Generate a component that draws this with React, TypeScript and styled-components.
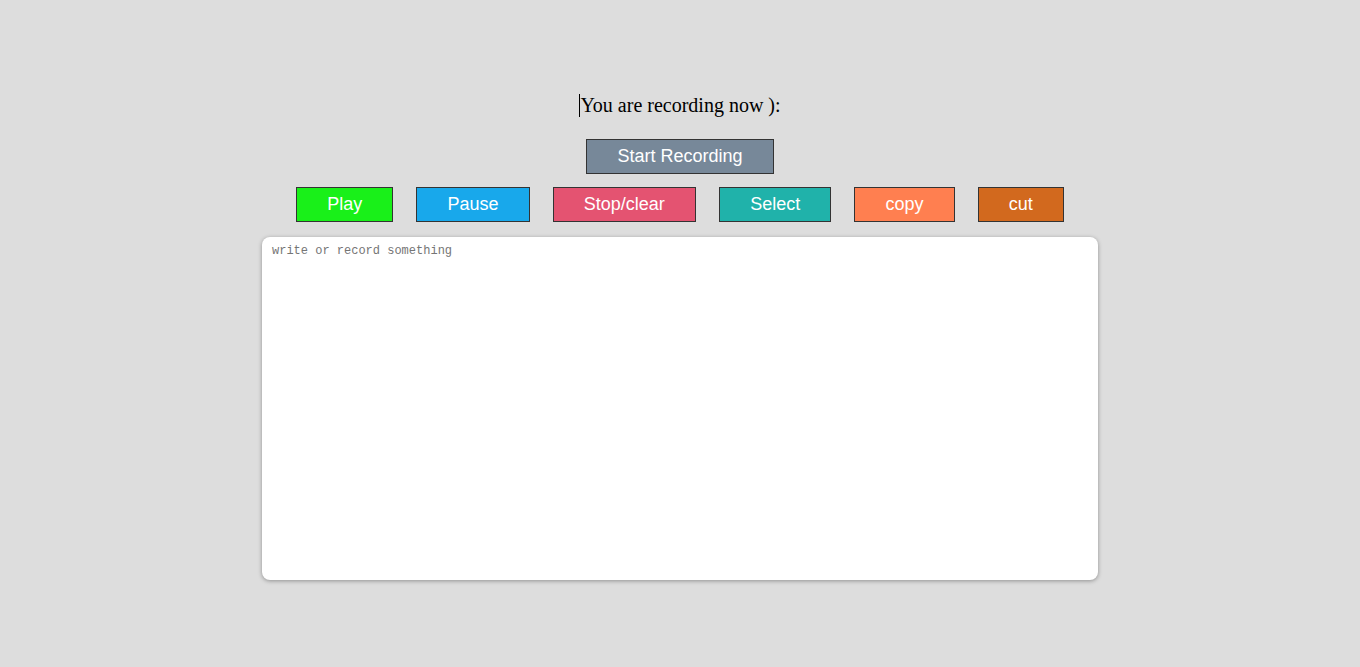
import React from "react";
import styled, { createGlobalStyle } from "styled-components";

const Global = createGlobalStyle`
  html, body { margin: 0; padding: 0; background: #dddddd; }
  body { font-family: "Liberation Serif", "Times New Roman", serif; }
`;

const Page = styled.main`
  display: flex;
  flex-direction: column;
  align-items: center;
  padding-top: 94px;
  min-height: 667px;
  box-sizing: border-box;
`;

const Heading = styled.p`
  margin: 0;
  font-family: "Liberation Serif", "Times New Roman", serif;
  font-size: 20px;
  line-height: 23px;
  color: #000;
  border-left: 1px solid #000;
`;

const Button = styled.button<{ $bg: string }>`
  font-family: "Liberation Sans", Arial, sans-serif;
  font-size: 18px;
  line-height: 21px;
  color: #fff;
  background: ${(p) => p.$bg};
  border: 1px solid #333;
  padding: 6px 30px;
  margin: 0;
  cursor: pointer;
`;

const StartRow = styled.div`
  margin-top: 22px;
  display: flex;
  justify-content: center;
`;

const Controls = styled.div`
  margin-top: 13px;
  display: flex;
  gap: 23.3px;
  justify-content: center;
`;

const Editor = styled.textarea`
  margin-top: 15px;
  width: 836px;
  height: 343px;
  box-sizing: border-box;
  border: none;
  border-radius: 8px;
  background: #fff;
  box-shadow: 0 1px 4px rgba(0, 0, 0, 0.35);
  padding: 7px 10px;
  font-family: "Liberation Mono", "DejaVu Sans Mono", monospace;
  font-size: 12px;
  line-height: 14px;
  resize: none;
  outline: none;
  &::placeholder { color: #757575; }
`;

const controls = [
  { label: "Play", bg: "#19f019" },
  { label: "Pause", bg: "#18a8eb" },
  { label: "Stop/clear", bg: "#e45371" },
  { label: "Select", bg: "#20b2aa" },
  { label: "copy", bg: "#ff7f50" },
  { label: "cut", bg: "#d2691e" },
];

export default function App() {
  return (
    <>
      <Global />
      <Page>
        <Heading>You are recording now ):</Heading>
        <StartRow>
          <Button $bg="#778899">Start Recording</Button>
        </StartRow>
        <Controls>
          {controls.map((c) => (
            <Button key={c.label} $bg={c.bg}>
              {c.label}
            </Button>
          ))}
        </Controls>
        <Editor placeholder="write or record something" />
      </Page>
    </>
  );
}
